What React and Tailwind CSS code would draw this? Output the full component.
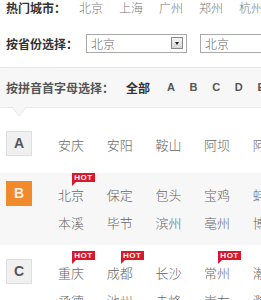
import React from "react";

const cjk = "font-['Noto_Sans_CJK_SC',sans-serif]";

function Hot() {
  return (
    <span className="absolute left-[14px] top-[-8px] h-[9px] w-[23px] bg-[#d9182b] text-white text-[8px] leading-[9px] font-bold text-center font-['Liberation_Sans',sans-serif] tracking-[0.5px]">
      HOT
      <span className="absolute left-0 top-[9px] w-0 h-0 border-t-[4px] border-t-[#d9182b] border-r-[4px] border-r-transparent" />
    </span>
  );
}

function City({ name, hot }) {
  return (
    <div className="relative w-[48.7px] shrink-0 h-[28px] flex items-center whitespace-nowrap">
      <span className="relative text-[13px] text-[#666] font-light leading-[28px]">
        {name}
      </span>
      {hot && <Hot />}
    </div>
  );
}

function Section({ letter, active, lines, className }) {
  return (
    <div className={"flex pl-[6px] " + className}>
      <div
        className={
          "w-[26px] h-[25px] shrink-0 flex items-center justify-center text-[14px] font-bold font-['Liberation_Sans',sans-serif] " +
          (active
            ? "bg-[#f08a2b] text-[#fdf0e4]"
            : "bg-[#f0f0f0] border border-[#dedede] text-[#555]")
        }
      >
        {letter}
      </div>
      <div className="ml-[26px] flex flex-col">
        {lines.map((line, i) => (
          <div key={i} className="flex">
            {line.map((c) => (
              <City key={c.n} name={c.n} hot={c.h} />
            ))}
          </div>
        ))}
      </div>
    </div>
  );
}

function Select({ arrow }) {
  return (
    <div className="relative w-[101px] h-[19px] shrink-0 border border-[#a9a9a9] bg-white flex items-center pl-[4px]">
      <span className="text-[12px] text-[#666] font-light">北京</span>
      {arrow && (
        <div className="absolute right-[3px] top-[2px] w-[12px] h-[12px] border border-[#8a8a8a] bg-gradient-to-b from-[#f4f4f4] to-[#d6d6d6] flex items-center justify-center">
          <span className="w-0 h-0 border-l-[2.5px] border-l-transparent border-r-[2.5px] border-r-transparent border-t-[3px] border-t-[#222]" />
        </div>
      )}
    </div>
  );
}

export default function App() {
  const hotCities = ["北京", "上海", "广州", "郑州", "杭州"];
  return (
    <div className={"w-[261px] h-[300px] overflow-hidden bg-white " + cjk}>
      {/* hot cities */}
      <div className="h-[16px] flex items-center pl-[6px] whitespace-nowrap text-[12px]">
        <span className="w-[73px] shrink-0 font-bold text-[#333]">热门城市：</span>
        {hotCities.map((c) => (
          <span key={c} className="w-[40px] shrink-0 text-[#777] font-light">
            {c}
          </span>
        ))}
      </div>

      {/* province select */}
      <div className="mt-[18px] h-[19px] flex items-center pl-[6px] whitespace-nowrap text-[12px]">
        <span className="w-[80px] shrink-0 font-bold text-[#333]">按省份选择：</span>
        <Select arrow />
        <div className="ml-[13px]">
          <Select />
        </div>
      </div>

      {/* pinyin bar */}
      <div className="relative mt-[14px] h-[41px] bg-[#f7f7f7] border-y border-[#e8e8e8] flex items-center pl-[6px] whitespace-nowrap text-[12px]">
        <span className="w-[120px] shrink-0 font-bold text-[#555]">按拼音首字母选择：</span>
        <span className="w-[41px] shrink-0 font-bold text-[#333]">全部</span>
        {["A", "B", "C", "D", "E"].map((l) => (
          <span
            key={l}
            className="w-[22.6px] shrink-0 font-bold text-[11px] text-[#555] font-['Liberation_Sans',sans-serif]"
          >
            {l}
          </span>
        ))}
        <svg
          className="absolute left-[12px] top-[39px]"
          width="14"
          height="10"
          viewBox="0 0 14 10"
        >
          <polygon points="0,0 14,0 7,9" fill="#f7f7f7" />
          <polyline points="0,0 7,9 14,0" fill="none" stroke="#e6e6e6" strokeWidth="1" />
        </svg>
      </div>

      <Section
        letter="A"
        className="pt-[23px] pb-[14px]"
        lines={[[{ n: "安庆" }, { n: "安阳" }, { n: "鞍山" }, { n: "阿坝" }, { n: "阿克苏" }]]}
      />
      <Section
        letter="B"
        active
        className="pt-[8px] pb-[8px] bg-[#f7f7f7]"
        lines={[
          [{ n: "北京", h: true }, { n: "保定" }, { n: "包头" }, { n: "宝鸡" }, { n: "蚌埠" }],
          [{ n: "本溪" }, { n: "毕节" }, { n: "滨州" }, { n: "亳州" }, { n: "博尔塔拉" }],
        ]}
      />
      <Section
        letter="C"
        className="pt-[14px]"
        lines={[
          [{ n: "重庆", h: true }, { n: "成都", h: true }, { n: "长沙" }, { n: "常州", h: true }, { n: "潮州" }],
          [{ n: "承德" }, { n: "池州" }, { n: "赤峰" }, { n: "崇左" }, { n: "滁州" }],
        ]}
      />
    </div>
  );
}
